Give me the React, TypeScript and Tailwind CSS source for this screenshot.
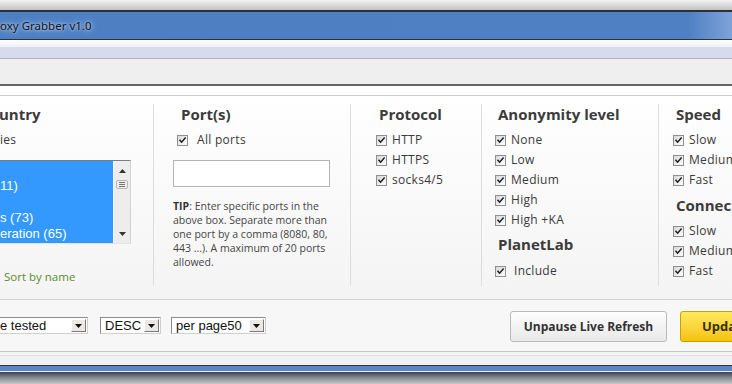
import React from "react";

const sans = "font-['Open_Sans','Noto_Sans',sans-serif]";
const arial = "font-['Liberation_Sans',Arial,sans-serif]";

function Box() {
  return (
    <span className="w-[11px] h-[11px] shrink-0 border border-[#8e8f8f] bg-gradient-to-br from-[#d8d8d8] to-white flex items-center justify-center">
      <svg width="9" height="9" viewBox="0 0 9 9">
        <path d="M1.5 3.8 L3.6 6.2 L7.6 1.6" stroke="#1e1e1e" strokeWidth="1.5" fill="none" />
      </svg>
    </span>
  );
}

function Opt({ label, wide }: { label: string; wide?: boolean }) {
  return (
    <div className="h-[20px] flex items-center">
      <Box />
      <span className={`${wide ? "ml-[8px]" : "ml-[5px]"} text-[12px] tracking-[0.3px] text-[#3a3a3a] whitespace-nowrap`}>{label}</span>
    </div>
  );
}

function Head({ children }: { children: React.ReactNode }) {
  return <div className="ml-[3px] h-[20px] leading-[20px] text-[15px] font-bold text-[#3b3b3b] whitespace-nowrap">{children}</div>;
}

function Arrow() {
  return (
    <span className="ml-auto mr-[1px] w-[15px] h-[13px] shrink-0 bg-[#ece9e4] border border-t-white border-l-white border-r-[#7a7a7a] border-b-[#7a7a7a] flex items-center justify-center">
      <svg width="7" height="4" viewBox="0 0 7 4">
        <path d="M0 0 H7 L3.5 4 Z" fill="#111" />
      </svg>
    </span>
  );
}

function Sel({ text, cls }: { text: string; cls: string }) {
  return (
    <div className={`h-[17px] flex items-center border border-[#8c8c8c] border-b-[#d0d0d0] border-r-[#d0d0d0] bg-white ${cls}`}>
      <span className={`${arial} text-[13px] text-[#111] whitespace-nowrap`}>{text}</span>
      <Arrow />
    </div>
  );
}

export default function App() {
  return (
    <div className={`w-[732px] h-[384px] overflow-hidden flex flex-col bg-white ${sans}`}>
      <div className="h-[10px] shrink-0 bg-gradient-to-b from-[#f3f3f3] to-[#c2c2c2]" />
      <div className="h-[2px] shrink-0 bg-[#2b303a]" />
      <div className="h-[27px] shrink-0 flex items-center bg-[linear-gradient(90deg,#4e7fc3_0%,#5080c4_94%,#7ea3d8_100%)]">
        <span className="font-['Noto_Sans',sans-serif] text-[11.5px] text-[#151515] whitespace-nowrap [text-shadow:0_0_6px_#b9d0ee,0_0_3px_#c6d8f0]">oxy Grabber v1.0</span>
      </div>
      <div className="h-[1px] shrink-0 bg-[#26344a]" />
      <div className="h-[7px] shrink-0 bg-gradient-to-b from-white to-[#eef0f7]" />
      <div className="h-[11px] shrink-0 bg-[#d7dcec]" />
      <div className="h-[1px] shrink-0 bg-[#b3b3c3]" />
      <div className="h-[25px] shrink-0 bg-[#efefef]" />
      <div className="h-[2px] shrink-0 bg-[#666666]" />
      <div className="h-[9px] shrink-0 bg-white" />
      <div className="h-[1px] shrink-0 bg-[#cbcbcb]" />

      {/* filter panel */}
      <div className="h-[203px] shrink-0 flex overflow-hidden bg-gradient-to-b from-white to-[#f4f4f4]">
        <div className="w-[153px] shrink-0 mt-[8px] flex flex-col">
          <div className="-ml-[1px] h-[20px] leading-[20px] text-[15px] font-bold text-[#3b3b3b]">untry</div>
          <div className="mt-[6px] h-[20px] leading-[20px] text-[12px] tracking-[0.3px] text-[#3a3a3a]">ies</div>
          <div className="mt-[10px] w-[131px] h-[84px] flex border border-l-0 border-t-[#7d7d7d] border-r-[#d4d4d4] border-b-[#e4e4e4]">
            <div className={`flex-1 bg-[#3399ff] pt-[1px] ${arial} text-[13px] text-white leading-[16px]`}>
              <div className="h-[16px]" />
              <div className="h-[16px]">11)</div>
              <div className="h-[16px]" />
              <div className="h-[16px]">s (73)</div>
              <div className="h-[16px] whitespace-nowrap">eration (65)</div>
            </div>
            <div className="w-[17px] bg-[#ededed] border-l border-[#f8f8f8] flex flex-col items-center">
              <svg className="mt-[8px]" width="7" height="4" viewBox="0 0 7 4">
                <path d="M0 4 H7 L3.5 0 Z" fill="#333" />
              </svg>
              <div className="mt-[7px] w-[12px] h-[9px] border border-[#b8b8b8] rounded-[2px] flex flex-col items-center justify-center gap-[1px]">
                <span className="w-[6px] h-[1px] bg-[#777]" />
                <span className="w-[6px] h-[1px] bg-[#777]" />
                <span className="w-[6px] h-[1px] bg-[#777]" />
              </div>
              <svg className="mt-auto mb-[7px]" width="7" height="4" viewBox="0 0 7 4">
                <path d="M0 0 H7 L3.5 4 Z" fill="#333" />
              </svg>
            </div>
          </div>
          <div className="mt-[25px] pl-[4px] h-[16px] leading-[16px] text-[11.5px] text-[#5e8c30]">Sort by name</div>
        </div>

        <div className="w-[197px] shrink-0 mt-[8px] mb-[13px] border-l border-[#dddddd] pl-[19px] flex flex-col">
          <div className="ml-[5px]">
            <Head>Port(s)</Head>
          </div>
          <div className="mt-[6px] pl-[4px] h-[20px] flex items-center">
            <Box />
            <span className="ml-[9px] text-[12px] tracking-[0.3px] text-[#3a3a3a]">All ports</span>
          </div>
          <div className="mt-[10px] w-[157px] h-[27px] border border-[#b4b4b4] bg-white" />
          <div className="mt-[12px] text-[10.5px] leading-[14px] text-[#454545] whitespace-nowrap">
            <b className="text-[#333]">TIP</b>: Enter specific ports in the
            <br />
            above box. Separate more than
            <br />
            one port by a comma (8080, 80,
            <br />
            443 ...). A maximum of 20 ports
            <br />
            allowed.
          </div>
        </div>

        <div className="w-[131px] shrink-0 mt-[8px] mb-[13px] border-l border-[#dddddd] pl-[25px] flex flex-col">
          <Head>Protocol</Head>
          <div className="mt-[6px]">
            <Opt label="HTTP" />
            <Opt label="HTTPS" />
            <Opt label="socks4/5" />
          </div>
        </div>

        <div className="w-[177px] shrink-0 mt-[8px] mb-[13px] border-l border-[#dddddd] pl-[13px] flex flex-col">
          <Head>Anonymity level</Head>
          <div className="mt-[6px]">
            <Opt label="None" />
            <Opt label="Low" />
            <Opt label="Medium" />
            <Opt label="High" />
            <Opt label="High +KA" />
          </div>
          <div className="mt-[4px]">
            <Head>PlanetLab</Head>
          </div>
          <div className="mt-[7px]">
            <Opt label="Include" wide />
          </div>
        </div>

        <div className="w-[120px] shrink-0 mt-[8px] mb-[13px] border-l border-[#dddddd] pl-[14px] flex flex-col">
          <Head>Speed</Head>
          <div className="mt-[6px]">
            <Opt label="Slow" />
            <Opt label="Medium" />
            <Opt label="Fast" />
          </div>
          <div className="mt-[5px]">
            <Head>Connection</Head>
          </div>
          <div className="mt-[6px]">
            <Opt label="Slow" />
            <Opt label="Medium" />
            <Opt label="Fast" />
          </div>
        </div>
      </div>

      <div className="h-[1px] shrink-0 bg-[#d2d2d2]" />
      {/* sort bar */}
      <div className="h-[51px] shrink-0 flex items-center bg-[#f7f7f7] overflow-hidden">
        <Sel text="e tested" cls="w-[88px] shrink-0 border-l-0" />
        <Sel text="DESC" cls="ml-[12px] w-[61px] shrink-0 pl-[4px]" />
        <Sel text="per page50" cls="ml-[10px] w-[95px] shrink-0 pl-[4px]" />
        <button className="ml-[244px] mt-[2px] w-[157px] h-[31px] shrink-0 rounded-[3px] border border-[#b9b9b9] bg-gradient-to-b from-[#fdfdfd] to-[#e9e9e9] text-[12px] font-bold text-[#333]">
          Unpause Live Refresh
        </button>
        <button className="ml-[13px] mt-[2px] w-[110px] h-[31px] shrink-0 rounded-[3px] border border-[#caa000] bg-gradient-to-b from-[#ffe95c] to-[#f5c300] text-left pl-[21px] text-[13px] font-bold text-[#3a3000]">
          Update
        </button>
      </div>
      <div className="h-[1px] shrink-0 bg-[#c6c6c6]" />
      <div className="h-[3px] shrink-0 bg-[#f4f4f4]" />
      <div className="h-[1px] shrink-0 bg-[#e0e0e0]" />
      <div className="h-[9px] shrink-0 bg-[#f1f1f1]" />
      <div className="h-[1px] shrink-0 bg-[#2b3344]" />
      <div className="h-[5px] shrink-0 bg-[#5a86c5]" />
      <div className="h-[1px] shrink-0 bg-[#e8eef8]" />
      <div className="flex-1 bg-gradient-to-b from-[#3c4250] via-[#8a8d94] to-[#c8c8c8]" />
    </div>
  );
}
